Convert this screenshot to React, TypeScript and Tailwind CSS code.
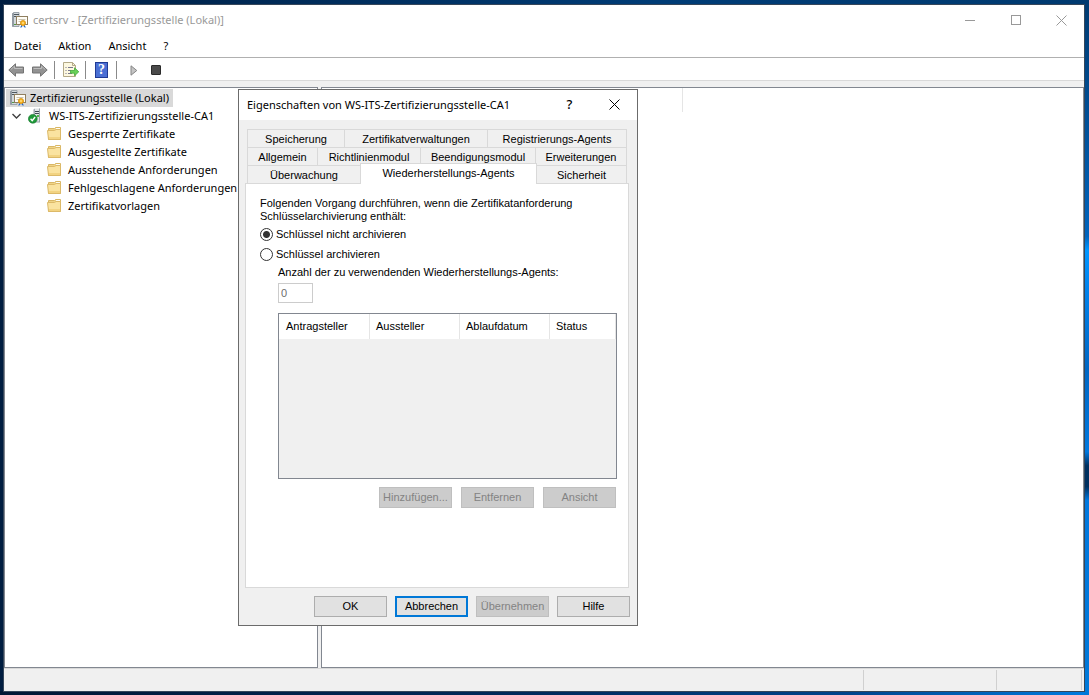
import React, { useState } from 'react'

const menuItems = ['Datei', 'Aktion', 'Ansicht', '?']

const folders = [
  'Gesperrte Zertifikate',
  'Ausgestellte Zertifikate',
  'Ausstehende Anforderungen',
  'Fehlgeschlagene Anforderungen',
  'Zertifikatvorlagen'
]

const CertServerIcon: React.FC = () => (
  <svg width="16" height="16" viewBox="0 0 16 16" className="shrink-0" aria-hidden="true">
    <path d="M0.5 1.5 L2 0.5 H7 V14.5 H0.5 Z" fill="#d3d9dd" stroke="#9aa3aa" />
    <path d="M0 1.5 L2 0.4 V14 L0 14.6 Z" fill="#929ba3" />
    <path d="M2 2.5 H7 M2 4.5 H7" stroke="#4c565e" />
    <rect x="2" y="12" width="2" height="1" fill="#4f9a45" />
    <rect x="4.5" y="4.5" width="11" height="8" fill="#fffdf6" stroke="#8f7f60" />
    <path d="M6.5 7.5 H13.5 M6.5 9.5 H9" stroke="#c9c3b2" />
    <path d="M9.6 12 L8.2 15.8 L10.4 15 Z M12.4 12 L13.8 15.8 L11.6 15 Z" fill="#2469c9" />
    <circle cx="11" cy="11" r="2.6" fill="#f6b11f" stroke="#d18a0c" strokeWidth="0.7" />
    <circle cx="11" cy="11" r="1" fill="#ffdf86" />
  </svg>
)

const ServerOkIcon: React.FC = () => (
  <svg width="16" height="16" viewBox="0 0 16 16" className="shrink-0" aria-hidden="true">
    <path d="M5.5 1.5 L7 0.5 H12 V14 H5.5 Z" fill="#e2e6e9" />
    <path d="M5.5 1.5 L7 0.5 V14 H5.5 Z" fill="#a3acb3" />
    <path d="M7 3.5 H12 M7 5.5 H12" stroke="#3f4a53" />
    <path d="M11.5 0.5 V14 M7 14 H12" stroke="#9aa3aa" />
    <rect x="9" y="7" width="2" height="2" fill="#4db848" />
    <circle cx="4.8" cy="10.8" r="4.4" fill="#1f9a3a" stroke="#137028" strokeWidth="0.6" />
    <path d="M2.6 10.8 L4.2 12.6 L7.1 9" fill="none" stroke="#ffffff" strokeWidth="1.4" />
  </svg>
)

const FolderIcon: React.FC = () => (
  <svg width="16" height="16" viewBox="0 0 16 16" className="shrink-0" aria-hidden="true">
    <path d="M2.5 2.5 H8.5 L9.5 1.5 H14.5 V13.5 H2.5 Z" fill="#f0d486" stroke="#d8b665" />
    <rect x="10" y="2" width="4" height="1" fill="#fffdf2" />
    <path d="M1.5 4.5 H8.5 L10 3.5 H14.5 V13.5 H2.5 Z" fill="#fae3a0" stroke="#dcb968" />
    <path d="M3 11.5 H14 M3 12.5 H14" stroke="#f2d382" />
  </svg>
)

const ArrowIcon: React.FC<{ flip?: boolean }> = ({ flip }) => (
  <svg width="17" height="14" viewBox="0 0 17 14" className={flip ? '-scale-x-100' : ''} aria-hidden="true">
    <path d="M0.8 7 L7.5 0.8 V4 H15.5 V10 H7.5 V13.2 Z" fill="#929292" stroke="#747474" />
    <path d="M2.8 6.5 L6.5 3.2 V5.5 H14.5" fill="none" stroke="#bdbdbd" />
  </svg>
)

const ExportIcon: React.FC = () => (
  <svg width="17" height="16" viewBox="0 0 17 16" aria-hidden="true">
    <path d="M0.5 0.5 H9.5 L12.5 3.5 V14.5 H0.5 Z" fill="#fdf8e0" stroke="#b3a987" />
    <path d="M9.5 0.5 V3.5 H12.5" fill="none" stroke="#b3a987" />
    <path d="M2.5 5.5 H3.5 M2.5 8.5 H3.5 M2.5 11.5 H3.5 M5 5.5 H10 M5 8.5 H8 M5 11.5 H9" stroke="#77778e" />
    <path d="M7.5 8.5 H11.5 V5.8 L15.8 9.8 L11.5 13.8 V11.2 H7.5 Z" fill="#68d157" stroke="#45a83a" strokeWidth="0.8" />
  </svg>
)

const CloseIcon: React.FC = () => (
  <svg width="11" height="11" viewBox="0 0 11 11" aria-hidden="true">
    <path d="M0.5 0.5 L10.5 10.5 M10.5 0.5 L0.5 10.5" stroke="currentColor" />
  </svg>
)

const Tab: React.FC<{ label: string; className: string }> = ({ label, className }) => (
  <button type="button" role="tab" className={`h-[19px] border border-[#d9d9d9] text-center leading-4 whitespace-nowrap ${className}`}>
    {label}
  </button>
)

const DialogButton: React.FC<{ label: string; disabled?: boolean; focused?: boolean }> = ({ label, disabled, focused }) => {
  let look = 'border border-[#adadad] bg-[#e1e1e1]'
  if (focused) look = 'border-2 border-[#0078d7] bg-[#e1e1e1]'
  if (disabled) look = 'border border-[#bfbfbf] bg-[#cccccc] text-[#838383]'
  return (
    <button type="button" disabled={disabled} className={`h-[21px] w-[73px] flex items-center justify-center whitespace-nowrap ${look}`}>
      {label}
    </button>
  )
}

const PropertiesDialog: React.FC = () => {
  const [archive, setArchive] = useState(false)
  const radio = 'appearance-none size-[13px] rounded-full border border-[#333333] bg-white checked:bg-[radial-gradient(circle,#333_3px,#fff_4px)]'

  return (
    <section
      role="dialog"
      aria-labelledby="dialog-title"
      className="absolute left-[234px] top-[84px] w-[400px] border border-[#6b6b6b] bg-[#f0f0f0] font-['Liberation_Sans',Arial,sans-serif] text-[11px] leading-[13px]"
    >
      <header className="h-[30px] bg-white flex items-center pl-2 pb-[2px] font-['Noto_Sans','Open_Sans',sans-serif]">
        <h2 id="dialog-title" className="flex-1 whitespace-nowrap">Eigenschaften von WS-ITS-Zertifizierungsstelle-CA1</h2>
        <button type="button" className="w-[45px] text-center text-[13px] font-medium">?</button>
        <button type="button" aria-label="Schließen" className="w-[45px] flex justify-center"><CloseIcon /></button>
      </header>

      <div className="pl-[6px] pr-[7px] pt-[9px] pb-2">
        {/* Tabs */}
        <div role="tablist" className="mr-px px-[2px]">
          <div className="flex">
            <Tab label="Speicherung" className="w-[98px]" />
            <Tab label="Zertifikatverwaltungen" className="w-36 -ml-px" />
            <Tab label="Registrierungs-Agents" className="flex-1 -ml-px" />
          </div>
          <div className="flex -mt-px">
            <Tab label="Allgemein" className="w-[71px]" />
            <Tab label="Richtlinienmodul" className="w-[104px] -ml-px" />
            <Tab label="Beendigungsmodul" className="w-[116px] -ml-px" />
            <Tab label="Erweiterungen" className="flex-1 -ml-px" />
          </div>
          <div className="flex items-end -mt-[3px]">
            <Tab label="Überwachung" className="w-[114px]" />
            <button type="button" role="tab" aria-selected="true" className="relative z-10 h-[21px] w-[177px] -ml-px border border-b-0 border-[#d9d9d9] bg-white pb-[2px] whitespace-nowrap">
              Wiederherstellungs-Agents
            </button>
            <Tab label="Sicherheit" className="flex-1 -ml-px" />
          </div>
        </div>

        {/* Tab page */}
        <div className="mr-px -mt-px border border-[#d9d9d9] bg-white pl-[14px] pr-[11px] pt-[13px] pb-[79px]">
          <p>Folgenden Vorgang durchführen, wenn die Zertifikatanforderung Schlüsselarchivierung enthält:</p>
          <label className="mt-1 flex h-[15px] items-center gap-[3px]">
            <input type="radio" name="archive" className={radio} checked={!archive} onChange={() => setArchive(false)} />
            Schlüssel nicht archivieren
          </label>
          <label className="mt-[5px] flex h-[15px] items-center gap-[3px]">
            <input type="radio" name="archive" className={radio} checked={archive} onChange={() => setArchive(true)} />
            Schlüssel archivieren
          </label>

          <div className="pl-[18px]">
            <label htmlFor="agent-count" className="mt-1 block">Anzahl der zu verwendenden Wiederherstellungs-Agents:</label>
            <input
              id="agent-count"
              type="text"
              defaultValue="0"
              disabled
              className="mt-1 block h-5 w-[35px] border border-[#cccccc] bg-white px-[2px] text-[11px] text-[#6d6d6d]"
            />

            <div className="mt-[10px] h-[166px] border border-[#828790] bg-[#f0f0f0]">
              <table className="w-full table-fixed border-separate border-spacing-0 bg-white">
                <thead>
                  <tr className="h-[25px] text-left">
                    <th className="w-[91px] border-r border-[#e5e5e5] pl-[7px] font-normal">Antragsteller</th>
                    <th className="w-[90px] border-r border-[#e5e5e5] pl-[6px] font-normal">Aussteller</th>
                    <th className="w-[90px] border-r border-[#e5e5e5] pl-[6px] font-normal">Ablaufdatum</th>
                    <th className="border-r border-[#e5e5e5] pl-[6px] font-normal">Status</th>
                  </tr>
                </thead>
              </table>
            </div>

            <div className="mt-2 flex justify-end gap-[9px] pr-px">
              <DialogButton label="Hinzufügen..." disabled />
              <DialogButton label="Entfernen" disabled />
              <DialogButton label="Ansicht" disabled />
            </div>
          </div>
        </div>

        <div className="mt-2 flex justify-end gap-2">
          <DialogButton label="OK" />
          <DialogButton label="Abbrechen" focused />
          <DialogButton label="Übernehmen" disabled />
          <DialogButton label="Hilfe" />
        </div>
      </div>
    </section>
  )
}

export default function App() {
  return (
    <div className="min-h-screen flex flex-col bg-[linear-gradient(to_bottom,#003a70,#0064bd_34%,#0096ff_36%,#0084ee_41%,#0067c4_53%,#0078de_65%,#00305f_67%,#00305f_70%,#0078de_72%,#0078d8),linear-gradient(to_right,#001735,#002a5c_50%,#00448c_78%,#007be0),linear-gradient(to_right,#001d40,#003c76_60%,#003a70)] bg-[size:5px_100%,100%_4px,100%_100%] bg-[position:right_top,left_bottom,left_top] bg-no-repeat pt-1 pr-1 pb-[3px] pl-[3px] font-['Noto_Sans','Open_Sans',sans-serif] text-[11px] leading-4 text-black">
      <div className="relative flex-1 flex flex-col border border-[#35465a] bg-white">
        {/* Title bar */}
        <header className="h-[30px] flex items-center pl-2 text-[#999999]">
          <CertServerIcon />
          <h1 className="ml-[5px] flex-1">certsrv - [Zertifizierungsstelle (Lokal)]</h1>
          <button type="button" aria-label="Minimieren" className="w-[46px] flex justify-center"><span className="h-px w-[10px] bg-[#999999]" /></button>
          <button type="button" aria-label="Maximieren" className="w-[45px] flex justify-center"><span className="size-[10px] border border-[#999999]" /></button>
          <button type="button" aria-label="Schließen" className="w-[46px] flex justify-center"><CloseIcon /></button>
        </header>

        <nav className="h-[23px] flex items-center gap-[17px] border-b border-[#b0b0b0] pl-[10px]">
          {menuItems.map((item) => (
            <button key={item} type="button">{item}</button>
          ))}
        </nav>

        {/* Toolbar */}
        <div className="h-[23px] flex items-center border-b border-[#d9d9d9] pl-1 pt-[2px]">
          <button type="button" aria-label="Zurück"><ArrowIcon /></button>
          <button type="button" aria-label="Vorwärts" className="ml-[6px]"><ArrowIcon flip /></button>
          <span className="mx-[6px] h-[18px] w-px bg-[#8a8a8a]" />
          <button type="button" aria-label="Liste exportieren" className="ml-[2px]"><ExportIcon /></button>
          <span className="ml-[5px] mr-[6px] h-[18px] w-px bg-[#8a8a8a]" />
          <button type="button" aria-label="Hilfe" className="ml-[3px] h-4 w-[13px] border border-[#1f3a94] bg-[#4a6fd4] font-['Liberation_Serif',serif] text-[14px] leading-[14px] font-bold text-white">?</button>
          <span className="mx-2 h-[18px] w-px bg-[#8a8a8a]" />
          <button type="button" aria-label="Dienst starten" className="ml-[5px]">
            <svg width="8" height="11" viewBox="0 0 8 11"><path d="M1 0.8 L6.8 5.5 L1 10.2 Z" fill="#c4c4c4" stroke="#858585" /></svg>
          </button>
          <button type="button" aria-label="Dienst beenden" className="ml-[13px] size-[10px] rounded-[1px] border border-[#2b2b2b] bg-[#4a4a4a]" />
        </div>

        {/* Tree and result pane */}
        <main className="flex-1 flex gap-[3px] bg-[#f0f0f0] pt-[6px]">
          <div className="w-[314px] border border-[#828790] bg-white pt-px">
            <div className="flex h-[18px]">
              <div className="ml-px flex items-center gap-1 bg-[#d9d9d9] px-1">
                <CertServerIcon />
                <span>Zertifizierungsstelle (Lokal)</span>
              </div>
            </div>
            <div className="flex h-[18px] items-center pl-[6px]">
              <svg width="11" height="8" viewBox="0 0 11 8" aria-hidden="true"><path d="M1.5 2 L5.5 6 L9.5 2" fill="none" stroke="#404040" strokeWidth="1.4" /></svg>
              <span className="ml-[6px] flex items-center gap-[5px]"><ServerOkIcon />WS-ITS-Zertifizierungsstelle-CA1</span>
            </div>
            <ul>
              {folders.map((name) => (
                <li key={name} className="flex h-[18px] items-center gap-[6px] pl-[41px] whitespace-nowrap">
                  <FolderIcon />
                  {name}
                </li>
              ))}
            </ul>
          </div>
          <div className="flex-1 border border-[#828790] bg-white">
            <div className="h-6 w-[361px] border-r border-[#e5e5e5]" />
          </div>
        </main>

        <footer className="h-[23px] flex justify-end border-t border-[#d9d9d9] bg-[#f0f0f0] py-px pr-[2px]">
          <span className="w-[133px] border-l border-[#d0d0d0]" />
          <span className="w-[86px] border-x border-[#d0d0d0]" />
        </footer>

        <PropertiesDialog />
      </div>
    </div>
  )
}
